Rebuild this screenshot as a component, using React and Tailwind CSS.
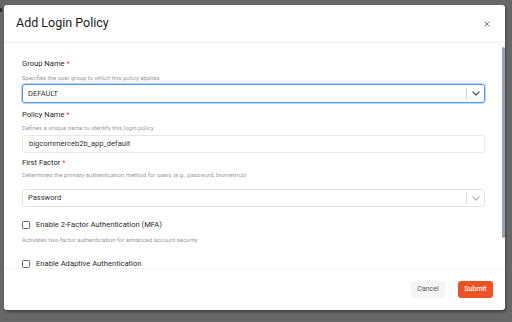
import React from "react";

function Chevron({ color = "#555" }) {
  return (
    <svg width="8" height="5" viewBox="0 0 8 5" fill="none">
      <path d="M1 1l3 3 3-3" stroke={color} strokeWidth="1.2" strokeLinecap="round" strokeLinejoin="round" />
    </svg>
  );
}

function Label({ children }) {
  return (
    <div className="h-[12px] text-[7.6px] leading-[12px] text-[#1f1f1f]">
      {children} <span className="text-[#e5484d]">*</span>
    </div>
  );
}

function Desc({ children, className = "" }) {
  return <div className={"h-[10px] text-[6px] leading-[10px] text-[#9b9b9b] " + className}>{children}</div>;
}

function Checkbox({ label, className = "" }) {
  return (
    <div className={"flex h-[12px] items-center gap-[6px] " + className}>
      <div className="h-[8px] w-[8px] rounded-[1.5px] border border-[#666] bg-white" />
      <span className="text-[7.6px] leading-[12px] text-[#2b2b2b]">{label}</span>
    </div>
  );
}

export default function App() {
  return (
    <div
      className="relative h-[322px] w-[512px] overflow-hidden bg-[#676767] pl-[4px] pt-[5px]"
      style={{ fontFamily: "Roboto, 'Noto Sans', sans-serif" }}
    >
      <div className="absolute left-0 top-[8px] h-[4px] w-[2px] bg-[#2a2a2a]" />
      <div className="flex h-[305px] w-[501px] flex-col overflow-hidden rounded-[3px] bg-white shadow-[1px_2px_3px_rgba(0,0,0,0.35)]">
        {/* header */}
        <div className="flex h-[38px] shrink-0 items-center justify-between border-b border-[#eeeeee] pl-[12px] pr-[15px]">
          <div className="text-[12.5px] text-[#1c1c1c]">Add Login Policy</div>
          <svg width="6" height="6" viewBox="0 0 6 6">
            <path d="M0.5 0.5l5 5M5.5 0.5l-5 5" stroke="#777" strokeWidth="1" />
          </svg>
        </div>
        {/* body */}
        <div className="flex min-h-0 flex-1 overflow-hidden">
          <div className="flex-1 pl-[18px] pr-[17px] pt-[15px]">
            <Label>Group Name</Label>
            <Desc className="mt-[3px]">Specifies the user group to which this policy applies</Desc>
            <div className="mt-[1px] flex h-[19px] items-center rounded-[3px] border border-[#5b96f5] shadow-[0_0_0_1px_#bcd3fb]">
              <span className="flex-1 pl-[5px] text-[7.5px] text-[#333]">DEFAULT</span>
              <div className="h-[10px] w-px bg-[#cfcfcf]" />
              <div className="flex w-[17px] items-center justify-center">
                <Chevron color="#555" />
              </div>
            </div>

            <div className="mt-[6px]">
              <Label>Policy Name</Label>
            </div>
            <Desc className="mt-[2px]">Defines a unique name to identify this login policy</Desc>
            <div className="mt-[2px] flex h-[18px] items-center rounded-[3px] border border-[#e6e6e6] pl-[6px] text-[7.5px] text-[#333]">
              bigcommerceb2b_app_default
            </div>

            <div className="mt-[4px]">
              <Label>First Factor</Label>
            </div>
            <Desc className="mt-[1px]">Determines the primary authentication method for users (e.g., password, biometrics)</Desc>
            <div className="mt-[9px] flex h-[18px] items-center rounded-[3px] border border-[#e3e3e3]">
              <span className="flex-1 pl-[5px] text-[7.5px] text-[#333]">Password</span>
              <div className="h-[10px] w-px bg-[#d6d6d6]" />
              <div className="flex w-[17px] items-center justify-center">
                <Chevron color="#b5b5b5" />
              </div>
            </div>

            <Checkbox className="mt-[12px]" label="Enable 2-Factor Authentication (MFA)" />
            <Desc className="mt-[4px]">Activates two-factor authentication for enhanced account security</Desc>
            <Checkbox className="mt-[13px]" label="Enable Adaptive Authentication" />
          </div>
          <div className="w-[3px] shrink-0 pt-[4px]">
            <div className="h-[191px] w-[3px] rounded-full bg-[#9aa3ad]" />
          </div>
        </div>
        {/* footer */}
        <div className="flex h-[42px] shrink-0 items-center justify-end gap-[13px] border-t border-[#f3f3f3] pr-[12px]">
          <button className="flex h-[17px] w-[34px] items-center justify-center rounded-[3px] bg-[#f5f5f5] text-[7px] text-[#555]">
            Cancel
          </button>
          <button className="flex h-[17px] w-[35px] items-center justify-center rounded-[3px] bg-[#ee5224] text-[7px] font-medium text-white">
            Submit
          </button>
        </div>
      </div>
    </div>
  );
}
